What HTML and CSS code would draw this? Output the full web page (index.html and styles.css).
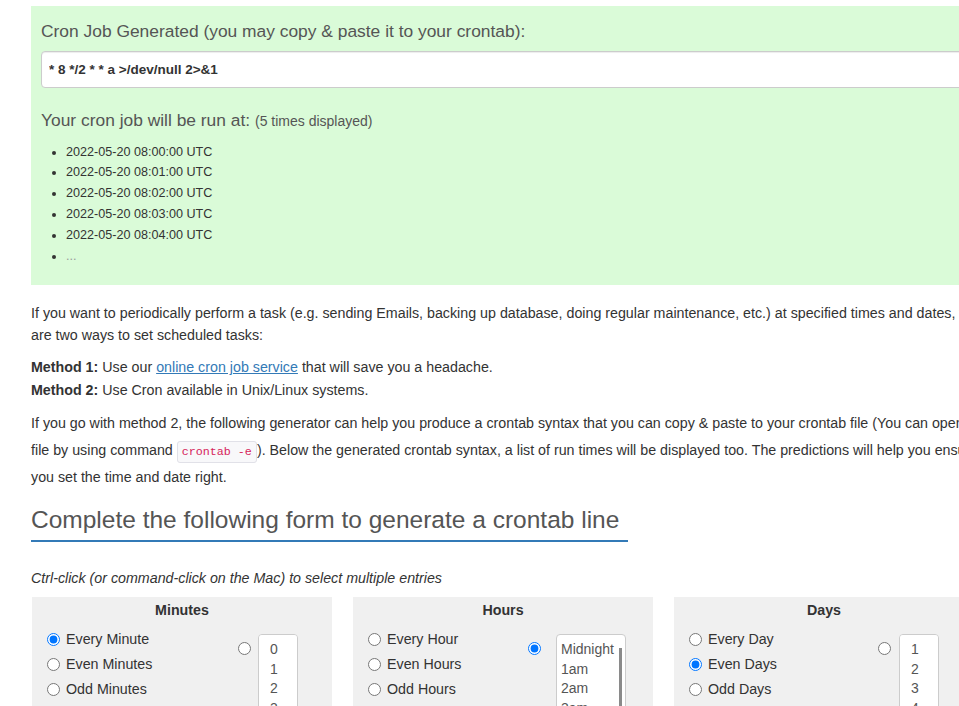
FILE: index.html
```
<!DOCTYPE html>
<html lang="en">
<head>
  <meta charset="UTF-8">
  <title>Crontab Generator</title>
  <link rel="stylesheet" href="styles.css">
</head>
<body>

  <div class="page">

    <!-- Result -->
    <div class="result">
      <h4>Cron Job Generated (you may copy &amp; paste it to your crontab):</h4>
      <input class="cron-line" type="text" value="* 8 */2 * * a >/dev/null 2>&1" readonly>
      <h4 class="runs">Your cron job will be run at: <small>(5 times displayed)</small></h4>
      <ul class="run-list">
        <li>2022-05-20 08:00:00 UTC</li>
        <li>2022-05-20 08:01:00 UTC</li>
        <li>2022-05-20 08:02:00 UTC</li>
        <li>2022-05-20 08:03:00 UTC</li>
        <li>2022-05-20 08:04:00 UTC</li>
        <li><span class="more">...</span></li>
      </ul>
    </div>

    <p class="intro">If you want to periodically perform a task (e.g. sending Emails, backing up database, doing regular maintenance, etc.) at specified times and dates, there are two ways to set scheduled tasks:</p>
    <p class="methods"><b>Method 1:</b> Use our <a href="#">online cron job service</a> that will save you a headache.<br><b>Method 2:</b> Use Cron available in Unix/Linux systems.</p>
    <p class="howto">If you go with method 2, the following generator can help you produce a crontab syntax that you can copy &amp; paste to your crontab file (You can open the file by using command <code>crontab -e</code>). Below the generated crontab syntax, a list of run times will be displayed too. The predictions will help you ensure you set the time and date right.</p>

    <h2 class="form-title">Complete the following form to generate a crontab line</h2>
    <p class="hint"><em>Ctrl-click (or command-click on the Mac) to select multiple entries</em></p>

    <!-- Form -->
    <div class="fields">

      <div class="field minutes">
        <div class="field-title">Minutes</div>
        <div class="field-body">
          <div class="presets">
            <label><input type="radio" name="minute" checked> Every Minute</label>
            <label><input type="radio" name="minute"> Even Minutes</label>
            <label><input type="radio" name="minute"> Odd Minutes</label>
          </div>
          <div class="pick">
            <input type="radio" name="minute">
            <select multiple size="12">
              <option>0</option><option>1</option><option>2</option><option>3</option><option>4</option>
              <option>5</option><option>6</option><option>7</option><option>8</option><option>9</option>
              <option>10</option><option>11</option><option>12</option><option>13</option><option>14</option>
            </select>
          </div>
        </div>
      </div>

      <div class="field hours">
        <div class="field-title">Hours</div>
        <div class="field-body">
          <div class="presets">
            <label><input type="radio" name="hour"> Every Hour</label>
            <label><input type="radio" name="hour"> Even Hours</label>
            <label><input type="radio" name="hour"> Odd Hours</label>
          </div>
          <div class="pick">
            <input type="radio" name="hour" checked>
            <select multiple size="12">
              <option>Midnight</option><option>1am</option><option>2am</option><option>3am</option>
              <option>4am</option><option>5am</option><option>6am</option><option>7am</option>
              <option>8am</option><option>9am</option><option>10am</option><option>11am</option>
              <option>Noon</option><option>1pm</option><option>2pm</option><option>3pm</option>
              <option>4pm</option><option>5pm</option><option>6pm</option><option>7pm</option>
              <option>8pm</option><option>9pm</option><option>10pm</option><option>11pm</option>
            </select>
          </div>
        </div>
      </div>

      <div class="field days">
        <div class="field-title">Days</div>
        <div class="field-body">
          <div class="presets">
            <label><input type="radio" name="day"> Every Day</label>
            <label><input type="radio" name="day" checked> Even Days</label>
            <label><input type="radio" name="day"> Odd Days</label>
          </div>
          <div class="pick">
            <input type="radio" name="day">
            <select multiple size="12">
              <option>1</option><option>2</option><option>3</option><option>4</option><option>5</option>
              <option>6</option><option>7</option><option>8</option><option>9</option><option>10</option>
              <option>11</option><option>12</option><option>13</option><option>14</option><option>15</option>
            </select>
          </div>
        </div>
      </div>

    </div>
  </div>

</body>
</html>
```

FILE: styles.css
```
html, body { overflow: hidden; }
body {
  margin: 0;
  font-family: "Liberation Sans", Arial, sans-serif;
  font-size: 14.25px;
  color: #333;
}
.page {
  width: 965px;
  padding-left: 31px;
}

/* result box */
.result {
  background: #dafbd8;
  margin-top: 6px;
  padding: 14px 10px 19px;
}
.result h4 {
  margin: 0;
  font-size: 17.4px;
  font-weight: normal;
  line-height: 22px;
  color: #555;
}
.result h4 small { font-size: 14px; }
.cron-line {
  display: block;
  box-sizing: border-box;
  width: 100%;
  height: 37px;
  margin-top: 9px;
  padding: 0 7px;
  border: 1px solid #ccc;
  border-radius: 4px;
  box-shadow: inset 0 1px 1px rgba(0,0,0,.075);
  font-family: "Liberation Sans", Arial, sans-serif;
  font-size: 13.5px;
  font-weight: bold;
  color: #333;
}
.result .runs { margin-top: 21px; }
.run-list {
  margin: 9.6px 0 0;
  padding-left: 25px;
  font-size: 12.6px;
  line-height: 20.8px;
}
.run-list .more { color: #999; }

/* text */
.intro { margin: 17px 0 0; line-height: 22px; }
.methods { margin: 10px 0 0; line-height: 23px; }
.howto { margin: 8px 0 0; line-height: 27px; }
a { color: #337ab7; }
code {
  font-family: "Liberation Mono", monospace;
  font-size: 11.7px;
  line-height: 1;
  color: #d6245a;
  background: #f8f8fa;
  border: 1px solid #e1e1e8;
  border-radius: 3px;
  padding: 3px 4px;
}
.form-title {
  display: inline-block;
  margin: 14.5px 0 0;
  padding: 0 9px 6px 0;
  border-bottom: 2px solid #337ab7;
  font-size: 24.5px;
  font-weight: normal;
  line-height: 28px;
  color: #555;
}
.hint { margin: 26px 0 0; line-height: 20px; }

/* form */
.fields {
  display: flex;
  gap: 21px;
  margin: 9px 0 0 1px;
}
.field {
  flex: none;
  width: 300px;
  padding-top: 3px;
  background: #f0f0f0;
}
.field-title {
  text-align: center;
  font-weight: bold;
  line-height: 20px;
}
.field-body {
  display: flex;
  margin-top: 7px;
  padding-left: 10px;
}
.presets { flex: 1; }
.presets label {
  display: flex;
  align-items: center;
  height: 25px;
}
.presets input {
  margin: 0 6px 0 5px;
}
.pick {
  display: flex;
  align-items: flex-start;
  margin-top: 7px;
  margin-right: 34px;
}
.pick input {
  margin: 8.5px 7px 0 0;
}
.pick select {
  width: 40px;
  padding: 5px 0 0 1px;
  border: 1px solid #ccc;
  border-radius: 4px;
  background: #fff;
  font-family: "Liberation Sans", Arial, sans-serif;
  font-size: 14px;
  color: #555;
  outline: none;
  scrollbar-width: none;
}
.pick option { padding: 1px 2px 2px 10px; }

.hours .pick { margin-right: 27px; }
.hours .pick input { margin-right: 15px; }
.hours .pick select {
  width: 70px;
  padding-left: 2px;
  /* thin scroll thumb */
  background: linear-gradient(#8a8a8a, #8a8a8a) no-repeat right 3px top 13px / 3px 120px, #fff;
}
.hours .pick option { padding-left: 2px; }
.days .pick { margin-right: 35px; }
.days .pick input { margin-right: 8px; }
```
